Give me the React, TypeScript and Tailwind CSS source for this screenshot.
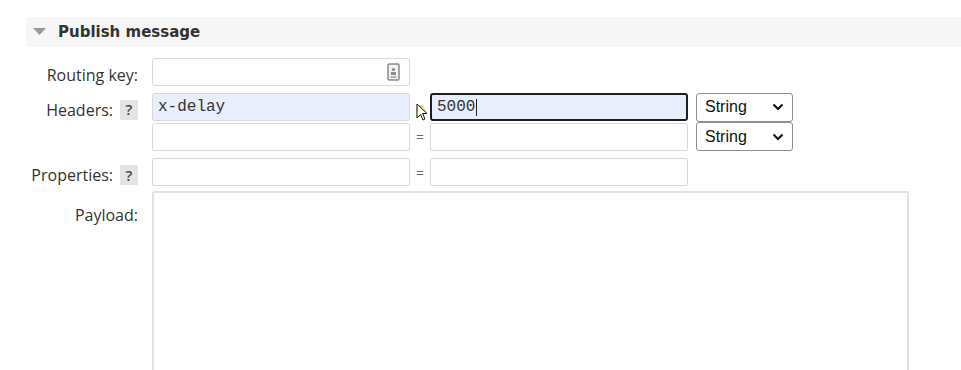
import React from "react";

const labelFont = { fontFamily: '"Open Sans", "Noto Sans", sans-serif' };

function Help() {
  return (
    <span className="ml-[7px] inline-flex h-[20px] w-[18px] items-center justify-center bg-[#e4e4e4] text-[15px] font-semibold text-[#444]">
      ?
    </span>
  );
}

function Input({ value, blue, focus, icon }: { value?: string; blue?: boolean; focus?: boolean; icon?: boolean }) {
  return (
    <div
      className={
        "relative flex h-[28px] w-[258px] items-center px-[5px] font-['Liberation_Mono',monospace] text-[16px] text-[#333] " +
        (focus
          ? "rounded-[3px] border-2 border-[#1e1e1e] bg-[#e8eefc] "
          : "rounded-[2px] border border-[#dadada] ") +
        (blue && !focus ? "bg-[#e8eefc] " : "") +
        (!blue && !focus ? "bg-white " : "")
      }
    >
      <span>{value}</span>
      {focus && <span className="ml-[1px] h-[17px] w-[1px] bg-[#222]" />}
      {icon && (
        <svg className="absolute right-[9px] top-[4px]" width="13" height="18" viewBox="0 0 13 18">
          <rect x="1" y="1" width="11" height="16" rx="1.5" fill="#f2f2f2" stroke="#8a8a8a" strokeWidth="1.5" />
          <circle cx="6.5" cy="6.5" r="1.6" fill="#8a8a8a" />
          <rect x="4" y="9" width="5" height="3" fill="#8a8a8a" />
          <rect x="3.5" y="13.5" width="6" height="1.2" fill="#8a8a8a" />
        </svg>
      )}
    </div>
  );
}

function Eq() {
  return <span className="flex w-[20px] justify-center text-[14px] text-[#666]" style={labelFont}>=</span>;
}

function Select() {
  return (
    <div className="ml-[8px] flex h-[29px] w-[97px] items-center justify-between rounded-[3px] border border-[#8f8f8f] bg-white pl-[8px] pr-[8px] font-['Liberation_Sans',Arial,sans-serif] text-[16px] text-[#111]">
      <span>String</span>
      <svg width="12" height="8" viewBox="0 0 12 8">
        <path d="M1.5 1.5 L6 6 L10.5 1.5" fill="none" stroke="#111" strokeWidth="2.2" />
      </svg>
    </div>
  );
}

function Label({ children, help }: { children: React.ReactNode; help?: boolean }) {
  return (
    <div className="flex w-[140px] shrink-0 items-center justify-end pr-[2px] pt-[6px] text-[16px] text-[#333]" style={labelFont}>
      <span>{children}</span>
      {help && <Help />}
    </div>
  );
}

export default function App() {
  return (
    <div className="relative h-[370px] w-[961px] overflow-hidden bg-white pt-[17px]">
      <div className="ml-[26px] flex h-[30px] items-center bg-[#f6f6f6]">
        <svg className="ml-[7px]" width="13" height="8" viewBox="0 0 13 8">
          <path d="M0 0 L13 0 L6.5 7 Z" fill="#9a9a9a" />
        </svg>
        <span className="ml-[12px] pt-[1px] font-['DejaVu_Sans',Verdana,sans-serif] text-[15px] font-bold text-[#333]">
          Publish message
        </span>
      </div>

      <div className="mt-[11px] flex h-[28px] items-center">
        <Label>Routing key:</Label>
        <div className="ml-[12px]">
          <Input icon />
        </div>
      </div>

      <div className="mt-[6px] flex">
        <div className="flex h-[29px] items-center">
          <Label help>Headers:</Label>
        </div>
        <div className="ml-[12px] flex flex-col">
          <div className="flex h-[30px] items-center">
            <Input value="x-delay" blue />
            <Eq />
            <Input value="5000" focus />
            <Select />
          </div>
          <div className="flex h-[29px] items-center">
            <Input />
            <Eq />
            <Input />
            <Select />
          </div>
        </div>
      </div>

      <div className="mt-[7px] flex h-[28px] items-center">
        <Label help>Properties:</Label>
        <div className="ml-[12px] flex items-center">
          <Input />
          <Eq />
          <Input />
        </div>
      </div>

      <div className="mt-[5px] flex">
        <div className="pt-[6px]">
          <Label>Payload:</Label>
        </div>
        <div className="ml-[12px] h-[200px] w-[757px] rounded-[2px] border-2 border-[#e2e2e2] bg-white" />
      </div>

      <svg className="absolute left-[416px] top-[103px]" width="14" height="20" viewBox="0 0 14 20">
        <circle cx="4" cy="8" r="6" fill="#f6e27a" opacity="0.7" />
        <path d="M1 1 L1 15 L4.5 11.5 L7 17 L9 16 L6.5 10.5 L11 10.5 Z" fill="#fff" stroke="#111" strokeWidth="1" />
      </svg>
    </div>
  );
}
